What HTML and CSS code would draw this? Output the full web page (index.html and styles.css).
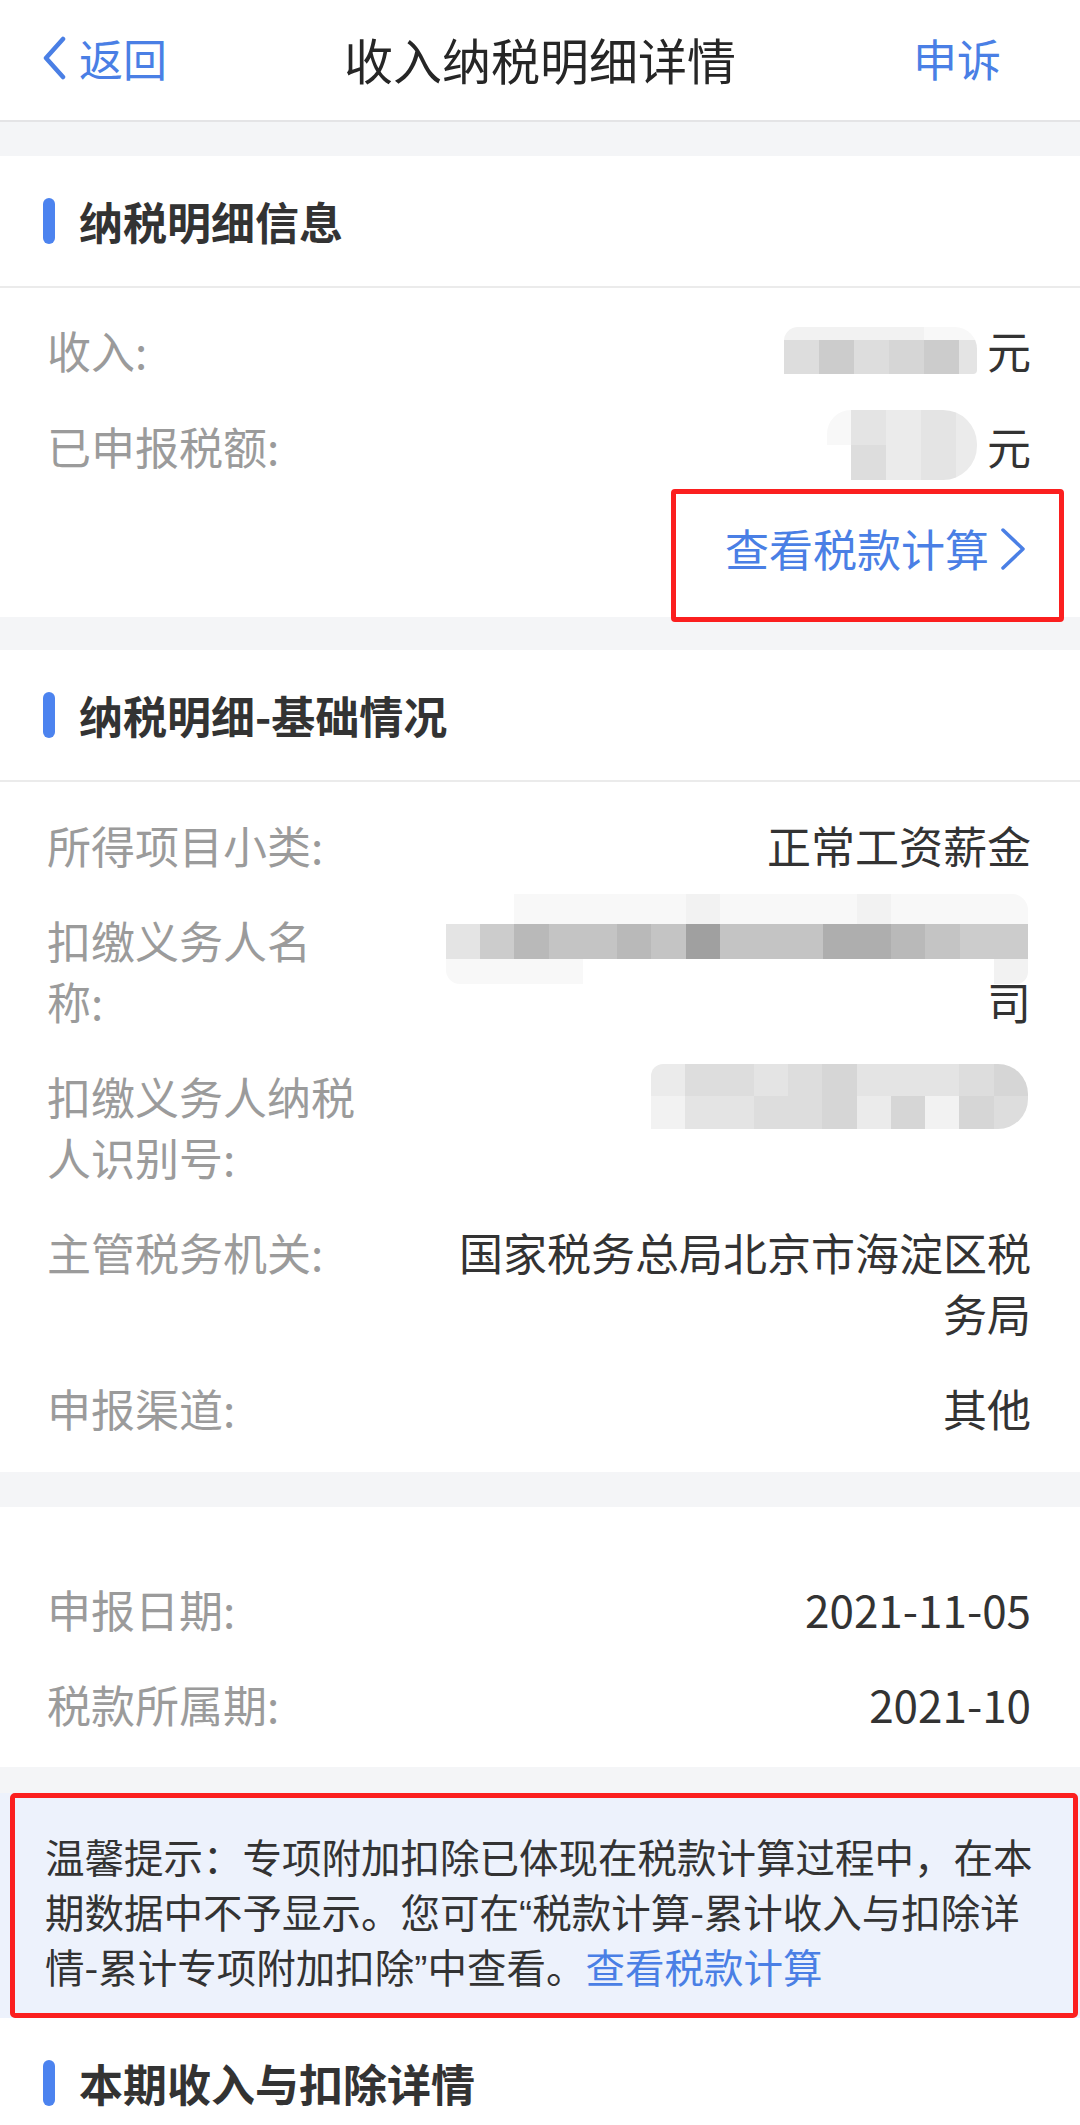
FILE: index.html
```html
<!DOCTYPE html>
<html lang="zh-CN">
<head>
<meta charset="utf-8">
<title>收入纳税明细详情</title>
<link rel="stylesheet" href="styles.css">
</head>
<body>
<header class="nav">
  <a class="nav-back"><svg class="back-ico" viewBox="0 0 26 44" width="26" height="44"><path d="M22 3 L5 22 L22 41"/></svg><span>返回</span></a>
  <h1 class="nav-title">收入纳税明细详情</h1>
  <a class="nav-action">申诉</a>
</header>
<div class="gap gap-top"></div>

<section class="card">
  <div class="card-head"><span class="bar"></span><h2>纳税明细信息</h2></div>
  <div class="rows rows-info">
    <div class="row">
      <span class="label">收入:</span>
      <span class="val val-money">
        <span class="mz mz-income">
          <i class="k1"></i><i class="k1"></i><i class="k1"></i><i class="k1"></i><i class="k0"></i><i class="k0"></i>
          <i class="k4"></i><i class="k6"></i><i class="k4"></i><i class="k5"></i><i class="k6"></i><i class="k3"></i>
        </span>元
      </span>
    </div>
    <div class="row">
      <span class="label">已申报税额:</span>
      <span class="val val-money">
        <span class="mz mz-tax">
          <i class="k0 tl"></i><i class="k3"></i><i class="k2"></i><i class="k3"></i><i class="k2"></i>
          <i class="none"></i><i class="k4"></i><i class="k2"></i><i class="k3"></i><i class="k2"></i>
        </span>元
      </span>
    </div>
    <div class="row row-link">
      <a class="calc-link">查看税款计算<svg class="link-ico" viewBox="0 0 30 42" width="30" height="42"><path d="M5 2 L25 21 L5 40"/></svg></a>
    </div>
  </div>
</section>
<div class="gap gap-mid"></div>

<section class="card">
  <div class="card-head"><span class="bar"></span><h2>纳税明细-基础情况</h2></div>
  <div class="rows rows-basic">
    <div class="row"><span class="label">所得项目小类:</span><span class="val">正常工资薪金</span></div>
    <div class="row">
      <span class="label">扣缴义务人名称:</span>
      <span class="val val-cover">
        <span class="blank-line"></span>司
        <span class="mz mz-name">
          <i class="none"></i><i class="none"></i><i class="k0"></i><i class="k0"></i><i class="k0"></i><i class="k0"></i><i class="k0"></i><i class="k1"></i><i class="k0"></i><i class="k0"></i><i class="k0"></i><i class="k0"></i><i class="k1"></i><i class="k0"></i><i class="k0"></i><i class="k0"></i><i class="k0"></i>
          <i class="k3"></i><i class="k6"></i><i class="k8"></i><i class="k7"></i><i class="k7"></i><i class="k8"></i><i class="k7"></i><i class="k10"></i><i class="k7"></i><i class="k7"></i><i class="k7"></i><i class="k9"></i><i class="k9"></i><i class="k8"></i><i class="k7"></i><i class="k6"></i><i class="k6"></i>
          <i class="k0"></i><i class="k0"></i><i class="k0"></i><i class="k0"></i><i class="none"></i><i class="none"></i><i class="none"></i><i class="none"></i><i class="none"></i><i class="none"></i><i class="none"></i><i class="none"></i><i class="none"></i><i class="none"></i><i class="none"></i><i class="none"></i><i class="k1"></i>
        </span>
      </span>
    </div>
    <div class="row">
      <span class="label">扣缴义务人纳税人识别号:</span>
      <span class="val val-id">
        <span class="mz mz-id">
          <i class="k2"></i><i class="k4"></i><i class="k4"></i><i class="k3"></i><i class="k4"></i><i class="k5"></i><i class="k3"></i><i class="k3"></i><i class="k3"></i><i class="k4"></i><i class="k5"></i>
          <i class="k1"></i><i class="k3"></i><i class="k3"></i><i class="k4"></i><i class="k4"></i><i class="k5"></i><i class="k2"></i><i class="k5"></i><i class="k1"></i><i class="k5"></i><i class="k4"></i>
        </span>
      </span>
    </div>
    <div class="row"><span class="label">主管税务机关:</span><span class="val">国家税务总局北京市海淀区税务局</span></div>
    <div class="row"><span class="label">申报渠道:</span><span class="val">其他</span></div>
  </div>
</section>
<div class="gap gap-mid2"></div>

<section class="card">
  <div class="rows rows-date">
    <div class="row"><span class="label">申报日期:</span><span class="val">2021-11-05</span></div>
    <div class="row"><span class="label">税款所属期:</span><span class="val">2021-10</span></div>
  </div>
</section>
<div class="gap gap-tip"></div>

<div class="tip">
  <p class="tip-text">温馨提示：专项附加扣除已体现在税款计算过程中，在本<br>期数据中不予显示。您可在<span class="q">“</span>税款计算-累计收入与扣除详<br>情-累计专项附加扣除<span class="q">”</span>中查看。<a class="tip-link">查看税款计算</a></p>
</div>

<section class="card">
  <div class="card-head"><span class="bar"></span><h2>本期收入与扣除详情</h2></div>
  <div class="rows rows-basic"></div>
</section>
</body>
</html>
```

FILE: styles.css
```css
* { box-sizing: border-box; }
html, body { margin: 0; padding: 0; }
body {
  width: 1080px;
  background: #f4f5f7;
  font-family: "Noto Sans CJK SC", "Noto Sans", sans-serif;
  color: #333;
}
h1, h2, p { margin: 0; }
a { text-decoration: none; }

/* nav */
.nav {
  height: 122px;
  background: #fff;
  border-bottom: 2px solid #e4e4e6;
  display: grid;
  grid-template-columns: 1fr auto 1fr;
  align-items: center;
  padding-bottom: 4px;
}
.nav-back {
  display: flex;
  align-items: center;
  gap: 12px;
  padding-left: 41px;
  color: #4a7fe5;
  font-size: 44px;
  line-height: 1;
}
.back-ico path, .link-ico path {
  fill: none;
  stroke: #4a7fe5;
  stroke-width: 4.5;
  stroke-linecap: round;
  stroke-linejoin: round;
}
.nav-title {
  font-size: 49px;
  font-weight: 400;
  color: #262626;
  line-height: 1;
}
.nav-action {
  justify-self: end;
  padding-right: 79px;
  font-size: 44px;
  line-height: 1;
  color: #4a7fe5;
}

/* gaps */
.gap-top { height: 34px; }
.gap-mid { height: 33px; }
.gap-mid2 { height: 35px; }
.gap-tip { height: 26px; }

/* cards */
.card { background: #fff; }
.card-head {
  height: 132px;
  display: flex;
  align-items: center;
  padding-left: 43px;
  border-bottom: 2px solid #ebebeb;
}
.bar {
  width: 12px;
  height: 46px;
  border-radius: 6px;
  background: #4c83ef;
  margin-right: 24px;
}
.card-head h2 {
  font-size: 44px;
  font-weight: 700;
  color: #333;
  line-height: 1;
}

.rows { padding: 32px 49px 38px 47px; }
.rows-basic { padding-top: 33px; padding-bottom: 33px; }
.rows-date { padding-top: 72px; padding-bottom: 32px; }
.rows-basic:empty { height: 200px; }

.row {
  display: flex;
  font-size: 44px;
  line-height: 61px;
}
.row + .row { margin-top: 34px; }
.rows-info .row + .row { margin-top: 35px; }
.rows-info .row-link { margin-top: 41px !important; }

.label {
  flex: none;
  width: 312px;
  color: #9b9b9b;
}
.val {
  flex: none;
  width: 600px;
  margin-left: auto;
  text-align: right;
  color: #333;
}
.val-money {
  display: flex;
  justify-content: flex-end;
  align-items: center;
  gap: 10px;
  height: 61px;
}
.val-cover { position: relative; }
.blank-line { display: block; height: 61px; }
.val-id {
  display: flex;
  justify-content: flex-end;
  align-items: flex-start;
  padding-right: 3px;
}

/* mosaics (redacted values) */
.mz { display: grid; overflow: hidden; flex: none; }
.mz i { display: block; }
.mz-income {
  width: 193px;
  height: 47px;
  grid-template-columns: 35px 35px 35px 35px 35px 18px;
  grid-template-rows: 13px 34px;
  border-radius: 14px 22px 4px 0;
}
.mz-tax {
  width: 150px;
  height: 70px;
  margin: -6px 0 -3px;
  grid-template-columns: 24px 35px 35px 35px 21px;
  grid-template-rows: 35px 35px;
  border-radius: 0 34px 34px 0;
}
.mz-tax .tl { border-top-left-radius: 24px; }
.mz-name {
  position: absolute;
  top: -16px;
  right: 3px;
  width: 582px;
  height: 90px;
  grid-template-columns: repeat(17, 1fr);
  grid-template-rows: 30px 35px 25px;
  border-radius: 14px 16px 12px 14px;
}
.mz-id {
  width: 377px;
  height: 65px;
  margin-top: -2px;
  grid-template-columns: repeat(11, 1fr);
  grid-template-rows: 32px 33px;
  border-radius: 12px 30px 30px 0;
}
.k0 { background: #f8f8f8; }
.k1 { background: #f2f2f2; }
.k2 { background: #ebebeb; }
.k3 { background: #e4e4e4; }
.k4 { background: #dddddd; }
.k5 { background: #d6d6d6; }
.k6 { background: #cccccc; }
.k7 { background: #c4c4c4; }
.k8 { background: #b9b9b9; }
.k9 { background: #aeaeae; }
.k10 { background: #a0a0a0; }
.none { background: transparent; }

/* link row */
.row-link { justify-content: flex-end; }
.calc-link {
  position: relative;
  display: flex;
  align-items: center;
  gap: 9px;
  height: 61px;
  color: #4a7fe5;
  font-size: 44px;
  line-height: 61px;
  padding-right: 3px;
}
.link-ico path { stroke-width: 3.5; }
.calc-link::after {
  content: "";
  position: absolute;
  top: -29px;
  bottom: -43px;
  left: -54px;
  right: -33px;
  border: 5px solid #fb1f1f;
  border-radius: 4px;
}

/* tip */
.tip {
  position: relative;
  background: #edf2fc;
  padding: 35px 20px 25px 45px;
}
.tip::after {
  content: "";
  position: absolute;
  top: 0;
  bottom: 0;
  left: 10px;
  right: 2px;
  border: 5px solid #fb1f1f;
  border-radius: 5px;
}
.tip-text {
  font-size: 39.5px;
  line-height: 55px;
  color: #333;
  white-space: nowrap;
}
.q { font-family: "Liberation Sans", sans-serif; line-height: 0; }
.tip-link { color: #4a7fe5; }
```
